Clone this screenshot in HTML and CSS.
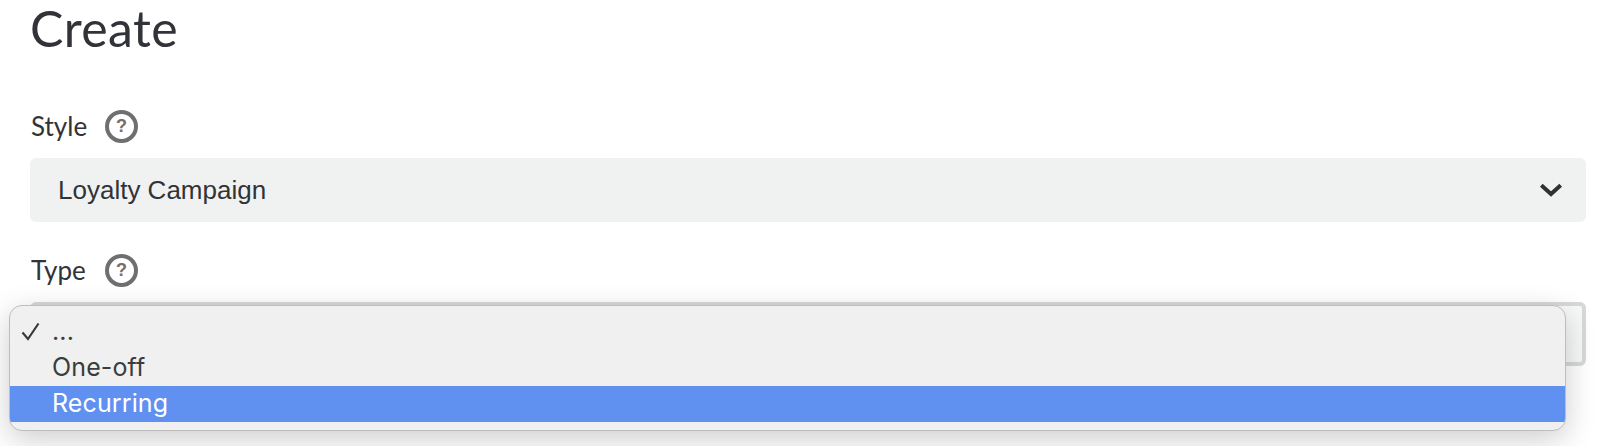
FILE: index.html
```html
<!DOCTYPE html>
<html lang="en">
<head>
  <meta charset="UTF-8">
  <title>Create</title>
  <link rel="stylesheet" href="styles.css">
</head>
<body>
  <main class="form-page">
    <h1>Create</h1>

    <div class="field">
      <div class="field-label">
        <span class="label-text">Style</span>
        <span class="help-icon">?</span>
      </div>
      <div class="select-box">
        <span>Loyalty Campaign</span>
        <svg class="chevron" width="22" height="14" viewBox="0 0 22 14">
          <path d="M1.3 2.3 L11 11 L20.7 2.3" fill="none" stroke="#2f3135" stroke-width="4"/>
        </svg>
      </div>
    </div>

    <div class="field field-type">
      <div class="field-label">
        <span class="label-text">Type</span>
        <span class="help-icon">?</span>
      </div>
      <div class="select-box select-open"></div>

      <!-- native macOS popup menu -->
      <ul class="popup-menu">
        <li>
          <svg class="check" width="19" height="19" viewBox="0 0 19 19">
            <path d="M1.5 10.5 L7 17 L17.5 1.5" fill="none" stroke="#3a3a3a" stroke-width="2.2"/>
          </svg>
          ...
        </li>
        <li>One-off</li>
        <li class="active">Recurring</li>
      </ul>
    </div>
  </main>
</body>
</html>
```

FILE: styles.css
```css
body {
  margin: 0;
  background: #ffffff;
  color: #313338;
  font-family: Lato, "Liberation Sans", sans-serif;
  height: 446px;
  overflow: hidden;
}

.form-page {
  padding: 0 18px 0 30px;
}

h1 {
  margin: 0;
  font-size: 50px;
  font-weight: 400;
  letter-spacing: 0.4px;
  line-height: 56px;
}

.field-label {
  display: flex;
  align-items: center;
  gap: 18px;
  height: 32px;
  margin-top: 54px;
  margin-bottom: 16px;
  padding-left: 1px;
  font-size: 26px;
}

.field-type .field-label {
  margin-top: 32px;
}

.label-text {
  width: 57px;
}

.help-icon {
  box-sizing: border-box;
  width: 33px;
  height: 33px;
  margin-left: -1px;
  border: 4px solid #6f6f6f;
  border-radius: 50%;
  color: #6f6f6f;
  font-family: "Liberation Sans", sans-serif;
  font-size: 18px;
  font-weight: 700;
  line-height: 25px;
  text-align: center;
}

.select-box {
  display: flex;
  align-items: center;
  justify-content: space-between;
  box-sizing: border-box;
  height: 64px;
  padding: 0 24px 0 28px;
  background: #f0f2f2;
  border-radius: 6px;
  font-family: "Liberation Sans", sans-serif;
  font-size: 26px;
}

.select-open {
  background: #f7f8f8;
  border: 4px solid #d6d8da;
}

.field-type {
  position: relative;
}

.popup-menu {
  position: absolute;
  top: 51px;
  left: -21px;
  width: 1557px;
  height: 126px;
  box-sizing: border-box;
  margin: 0;
  padding: 8px 0 0;
  list-style: none;
  background: #f0f0f0;
  border: 1px solid #bdbdbd;
  border-radius: 13px;
  box-shadow: 0 8px 30px rgba(0, 0, 0, 0.2);
  overflow: hidden;
  font-family: Inter, "Liberation Sans", sans-serif;
  font-size: 25px;
  letter-spacing: 0.12px;
  color: #3c3c3c;
}

.popup-menu li {
  position: relative;
  height: 36px;
  line-height: 35px;
  padding-left: 42px;
}

.popup-menu li.active {
  background: #6091f1;
  color: #ffffff;
}

.check {
  position: absolute;
  left: 11px;
  top: 8px;
}
```
